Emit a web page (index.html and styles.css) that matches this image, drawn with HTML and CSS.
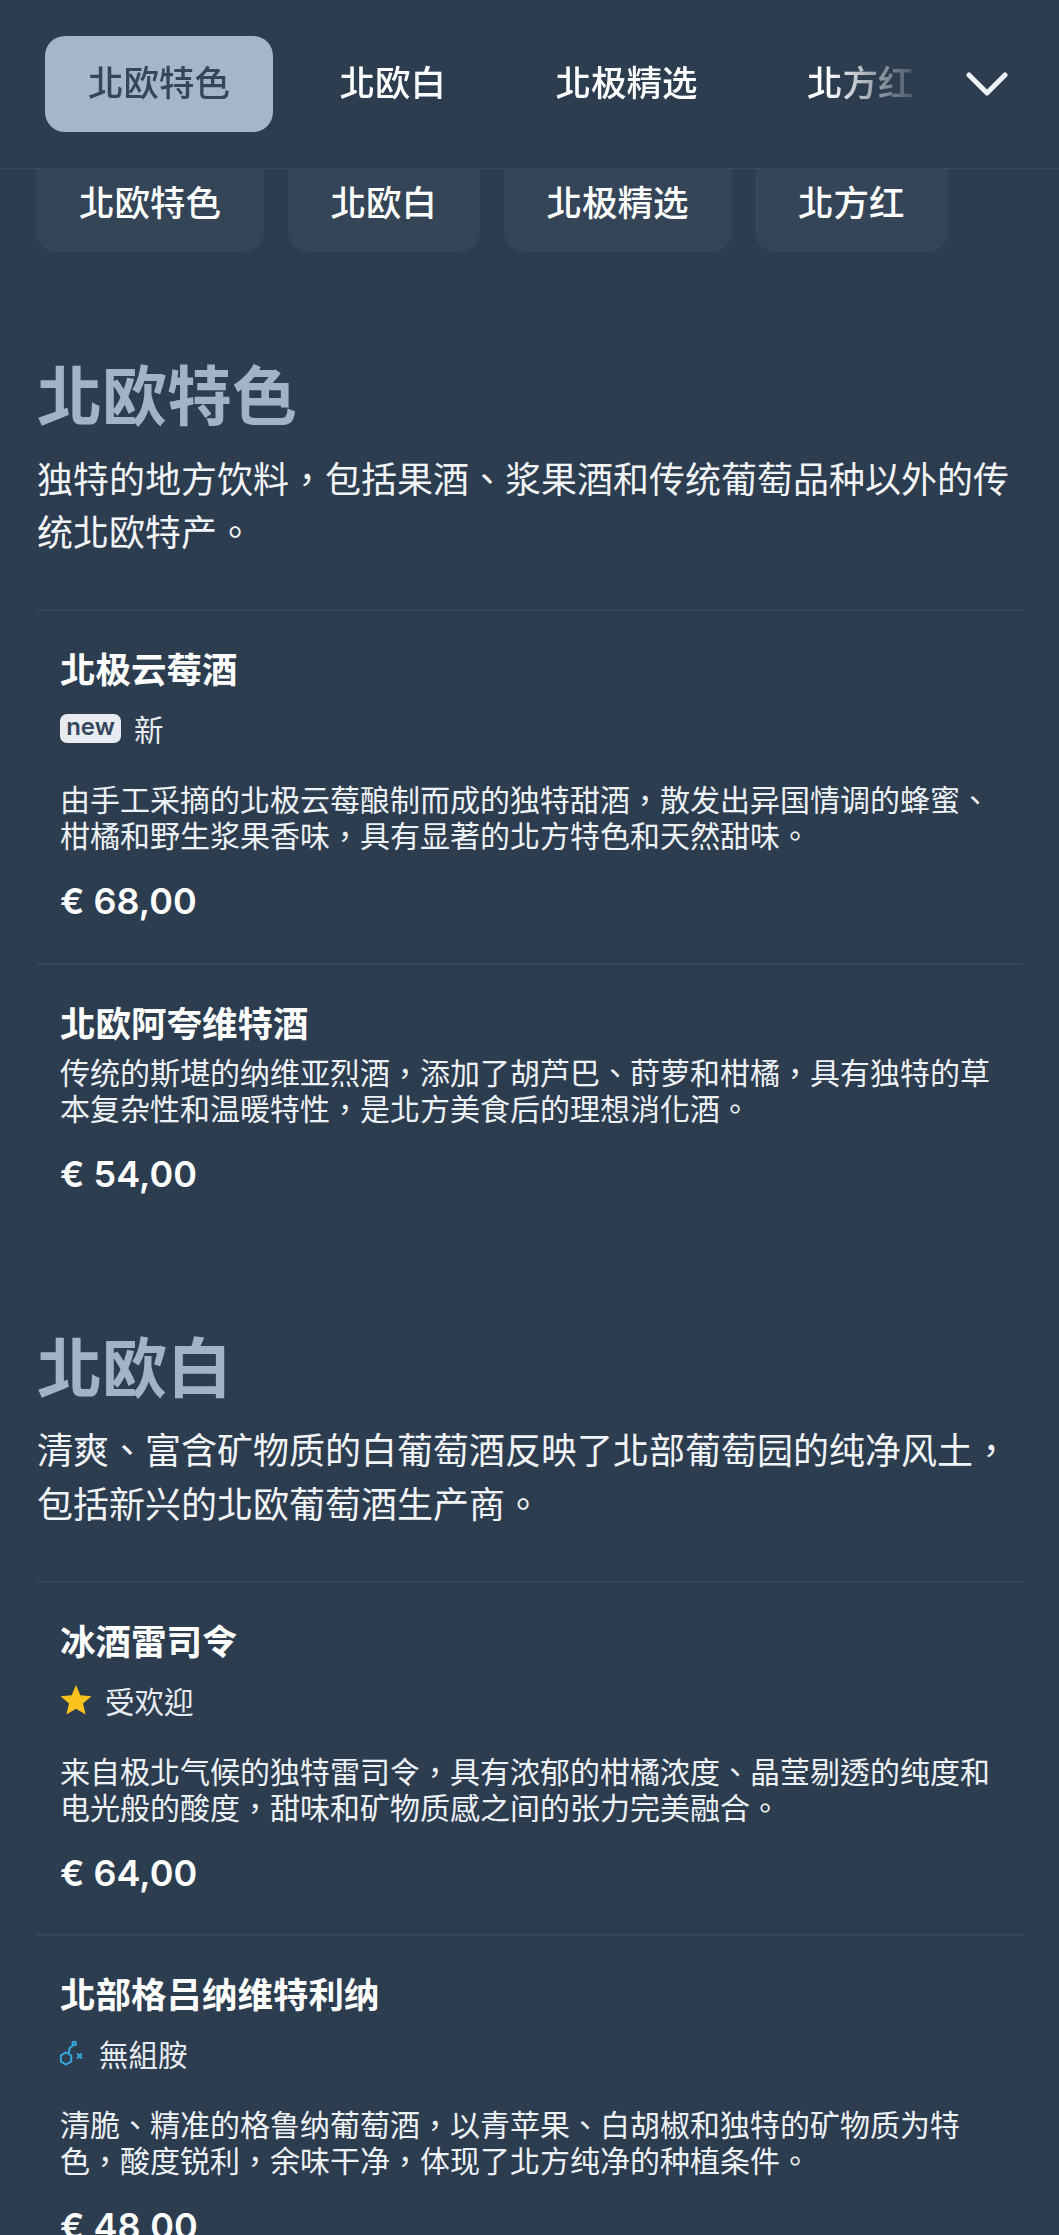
FILE: index.html
```html
<!DOCTYPE html>
<html lang="zh-Hant">
<head>
<meta charset="utf-8">
<title>菜单</title>
<link rel="stylesheet" href="styles.css">
</head>
<body>
<header class="topbar">
  <nav class="topbar-tabs">
    <a class="tab tab-active">北欧特色</a>
    <a class="tab">北欧白</a>
    <a class="tab">北极精选</a>
    <a class="tab">北方红</a>
  </nav>
  <svg class="chevron" viewBox="0 0 42 24" width="42" height="24" aria-hidden="true"><path d="M3 3 L21 21 L39 3" fill="none" stroke="#eef1f5" stroke-width="5" stroke-linecap="round" stroke-linejoin="round"/></svg>
</header>
<nav class="subtabs">
  <a class="subtab">北欧特色</a>
  <a class="subtab">北欧白</a>
  <a class="subtab">北极精选</a>
  <a class="subtab">北方红</a>
</nav>
<main>
  <section class="section">
    <h2 class="section-title">北欧特色</h2>
    <p class="section-desc">独特的地方饮料&#xFF0C;包括果酒、浆果酒和传统葡萄品种以外的传统北欧特产。</p>
    <article class="item">
      <h3 class="item-name">北极云莓酒</h3>
      <div class="item-tag"><span class="badge-new">new</span><span>新</span></div>
      <p class="item-desc">由手工采摘的北极云莓酿制而成的独特甜酒&#xFF0C;散发出异国情调的蜂蜜、柑橘和野生浆果香味&#xFF0C;具有显著的北方特色和天然甜味。</p>
      <div class="item-price">€ 68,00</div>
    </article>
    <article class="item">
      <h3 class="item-name">北欧阿夸维特酒</h3>
      <p class="item-desc">传统的斯堪的纳维亚烈酒&#xFF0C;添加了胡芦巴、莳萝和柑橘&#xFF0C;具有独特的草本复杂性和温暖特性&#xFF0C;是北方美食后的理想消化酒。</p>
      <div class="item-price">€ 54,00</div>
    </article>
  </section>
  <section class="section">
    <h2 class="section-title">北欧白</h2>
    <p class="section-desc">清爽、富含矿物质的白葡萄酒反映了北部葡萄园的纯净风土&#xFF0C;包括新兴的北欧葡萄酒生产商。</p>
    <article class="item">
      <h3 class="item-name">冰酒雷司令</h3>
      <div class="item-tag tag-star">
        <svg class="icon-star" viewBox="0 0 32 32" width="32" height="32" aria-hidden="true"><path d="M16 1 L20.3 11.2 L31.5 12.2 L23 19.5 L25.6 30.5 L16 24.7 L6.4 30.5 L9 19.5 L.5 12.2 L11.7 11.2 Z" fill="#fbc21f"/></svg>
        <span>受欢迎</span>
      </div>
      <p class="item-desc">来自极北气候的独特雷司令&#xFF0C;具有浓郁的柑橘浓度、晶莹剔透的纯度和电光般的酸度&#xFF0C;甜味和矿物质感之间的张力完美融合。</p>
      <div class="item-price">€ 64,00</div>
    </article>
    <article class="item">
      <h3 class="item-name">北部格吕纳维特利纳</h3>
      <div class="item-tag tag-hist">
        <svg class="icon-hist" viewBox="0 0 26 26" width="26" height="26" aria-hidden="true">
          <g fill="none" stroke="#35a9dc" stroke-width="2">
            <path d="M6 12.5 L11.2 15.5 V21.5 L6 24.5 L.8 21.5 V15.5 Z"/>
            <path d="M9 13.5 L9.5 8 L13 5.5"/>
            <circle cx="14.2" cy="3.5" r="1.8"/>
            <path d="M17 13.5 L22 18.5 M22 13.5 L17 18.5"/>
          </g>
        </svg>
        <span>無組胺</span>
      </div>
      <p class="item-desc">清脆、精准的格鲁纳葡萄酒&#xFF0C;以青苹果、白胡椒和独特的矿物质为特色&#xFF0C;酸度锐利&#xFF0C;余味干净&#xFF0C;体现了北方纯净的种植条件。</p>
      <div class="item-price">€ 48,00</div>
    </article>
  </section>
</main>
</body>
</html>
```
FILE: styles.css
```css
* { box-sizing: border-box; }
html, body { margin: 0; padding: 0; }
html { height: 2235px; overflow: hidden; }
body {
  height: 2235px;
  overflow: hidden;
  background: #2d3d50;
  color: #f2f4f7;
  font-family: "Noto Sans CJK TC", "Noto Sans CJK SC", "Noto Sans", sans-serif;
}
.topbar {
  position: relative;
  z-index: 2;
  height: 169px;
  display: flex;
  align-items: flex-start;
  padding: 36px 51px 0 45px;
  background: #2d3d50;
  border-bottom: 1px solid #3a4a5d;
}
.topbar-tabs {
  flex: 1;
  display: flex;
  gap: 23.5px;
  overflow: hidden;
  -webkit-mask-image: linear-gradient(to right, #000 87%, transparent 98%);
  mask-image: linear-gradient(to right, #000 87%, transparent 98%);
}
.tab, .subtab {
  flex: none;
  height: 96px;
  display: flex;
  align-items: center;
  padding: 0 43px 6px;
  border-radius: 20px;
  font-size: 35.5px;
  font-weight: 500;
  line-height: 1;
  color: #fff;
}
.tab-active {
  background: #a4b6cc;
  color: #34465c;
}
.chevron {
  flex: none;
  margin: 36px 0 0 21px;
}
.subtabs {
  display: flex;
  gap: 23.5px;
  margin-top: -13px;
  padding-left: 36px;
}
.subtab { background: #344558; }
.section { padding: 0 36px 0 37px; }
.section:first-child { margin-top: 100px; }
.section + .section { margin-top: 88px; }
.section-title {
  margin: 0;
  font-size: 65px;
  font-weight: 700;
  line-height: 80px;
  color: #a0b3c8;
}
.section-desc {
  margin: 18.5px 0 51.5px;
  font-size: 36px;
  line-height: 53.5px;
  color: #f2f4f7;
}
.item {
  padding: 35px 24px 39.5px 23px;
  border-top: 2px solid #36475b;
}
.item-name {
  margin: 0 0 9.5px;
  font-size: 35.5px;
  font-weight: 700;
  line-height: 44px;
  color: #fff;
}
.item-tag {
  display: flex;
  align-items: center;
  height: 40px;
  margin: 18px 0 32px;
  font-size: 29.5px;
  line-height: 40px;
  color: #e8ecf1;
}
.badge-new {
  display: block;
  width: 61px;
  height: 29px;
  margin-right: 13px;
  border-radius: 7px;
  background: #e8ebef;
  color: #34465c;
  font-family: "Inter", "Noto Sans", sans-serif;
  font-size: 24px;
  font-weight: 600;
  line-height: 25px;
  text-align: center;
}
.icon-star { margin-right: 13px; }
.icon-hist { margin-right: 13px; }
.item-desc {
  margin: 0;
  font-size: 30px;
  line-height: 36px;
  color: #eef1f5;
}
.item-price {
  margin-top: 27px;
  font-family: "Inter", "Noto Sans", sans-serif;
  font-size: 36px;
  font-weight: 600;
  line-height: 44px;
  color: #fff;
}
```
